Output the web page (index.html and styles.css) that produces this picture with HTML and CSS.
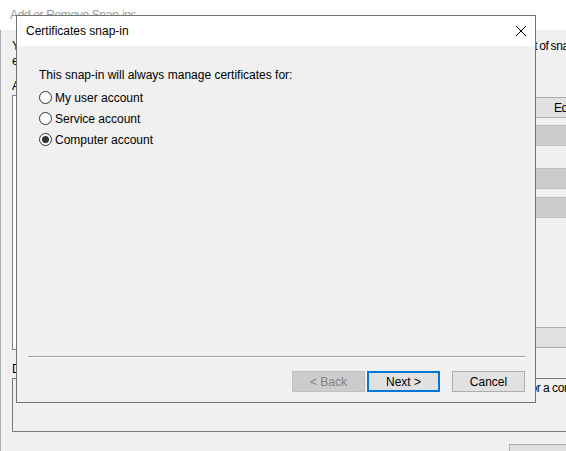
FILE: index.html
```html
<!DOCTYPE html>
<html lang="en">
<head>
<meta charset="utf-8">
<title>Certificates snap-in</title>
<link rel="stylesheet" href="styles.css">
</head>
<body>
<div class="bg-window">
  <div class="bg-title">Add or Remove Snap-ins</div>
  <div class="bg-body">
    <p class="bg-intro">You can select snap-ins for this console from those available on your computer and configure the selected set of snap-ins. For<br>extensible snap-ins, you can configure which extensions are enabled.</p>
    <div class="bg-label">Available snap-ins:</div>
    <div class="bg-main">
      <div class="bg-list"></div>
      <div class="bg-mid"><div class="bg-btn">Add &gt;</div></div>
      <div class="bg-list"></div>
      <div class="bg-side">
        <div class="bg-btn b-edit">Edit Extensions...</div>
        <div class="bg-btn is-disabled b-remove">Remove</div>
        <div class="bg-btn is-disabled b-up">Move Up</div>
        <div class="bg-btn is-disabled b-down">Move Down</div>
        <div class="bg-btn b-adv">Advanced...</div>
      </div>
    </div>
    <div class="bg-desc-label">Description:</div>
    <div class="bg-desc">The Certificates snap-in allows you to browse the contents of the certificate stores for yourself, a service, or a computer.</div>
    <div class="bg-footer">
      <div class="bg-btn b-ok">OK</div>
      <div class="bg-btn b-ok">Cancel</div>
    </div>
  </div>
</div>

<div class="dialog" role="dialog" aria-label="Certificates snap-in">
  <div class="dlg-title">
    <span>Certificates snap-in</span>
    <svg class="dlg-close" width="10" height="10" viewBox="0 0 10 10" aria-hidden="true">
      <path d="M0 0 L10 10 M10 0 L0 10" stroke="#000" stroke-width="1" fill="none"/>
    </svg>
  </div>
  <div class="dlg-body">
    <p class="dlg-lead">This snap-in will always manage certificates for:</p>
    <label class="radio-row"><input type="radio" name="acct" class="radio"><span>My user account</span></label>
    <label class="radio-row"><input type="radio" name="acct" class="radio"><span>Service account</span></label>
    <label class="radio-row"><input type="radio" name="acct" class="radio" checked><span>Computer account</span></label>
    <div class="dlg-footer">
      <div class="dlg-sep"></div>
      <div class="dlg-buttons">
        <button class="btn btn-disabled" disabled>&lt; Back</button>
        <button class="btn btn-default">Next &gt;</button>
        <button class="btn btn-cancel">Cancel</button>
      </div>
    </div>
  </div>
</div>
</body>
</html>
```
FILE: styles.css
```css
html, body {
  margin: 0;
  padding: 0;
}
body {
  width: 566px;
  height: 451px;
  overflow: hidden;
  position: relative;
  background: #f0f0f0;
  font-family: "Liberation Sans", Arial, sans-serif;
  font-size: 12px;
  color: #000;
}

/* ---------- background window ---------- */
.bg-window {
  width: 680px;
  letter-spacing: -0.36px;
}
.bg-title {
  height: 30px;
  background: #fff;
  display: flex;
  align-items: center;
  padding-left: 10px;
  color: #999;
}
.bg-body {
  border-left: 1px solid #aaaaaa;
  padding: 9px 12px 0 11px;
  height: 421px;
  box-sizing: border-box;
}
.bg-intro {
  margin: 0;
  line-height: 15px;
  white-space: nowrap;
  letter-spacing: -0.365px;
  word-spacing: -0.95px;
}
.bg-label {
  margin-top: 10px;
  line-height: 15px;
}
.bg-main {
  margin-top: 1px;
  display: grid;
  grid-template-columns: 218px 80px 1fr 142px;
  column-gap: 8px;
  height: 255px;
}
.bg-list {
  border: 1px solid #828282;
  background: #fff;
}
.bg-mid {
  display: flex;
  align-items: center;
}
.bg-side {
  display: flex;
  flex-direction: column;
  padding-top: 2px;
}
.bg-btn {
  height: 21px;
  box-sizing: border-box;
  border: 1px solid #adadad;
  background: #e1e1e1;
  display: flex;
  align-items: center;
  justify-content: center;
  width: 100%;
}
.bg-btn.is-disabled {
  background: #cccccc;
  border-color: #bfbfbf;
  color: #838383;
}
.b-remove { margin-top: 7px; }
.b-up { margin-top: 22px; }
.b-down { margin-top: 8px; }
.b-adv { margin-top: auto; margin-bottom: 2px; }

.bg-desc-label {
  margin-top: 12px;
  line-height: 15px;
}
.bg-desc {
  margin-top: 1px;
  height: 54px;
  box-sizing: border-box;
  border: 1px solid #7a7a7a;
  padding: 2px 3px;
  line-height: 15px;
  white-space: nowrap;
  word-spacing: -0.25px;
}
.bg-footer {
  margin-top: 12px;
  display: flex;
  justify-content: flex-end;
  gap: 9px;
}
.bg-btn.b-ok {
  width: 75px;
  height: 25px;
}

/* ---------- dialog ---------- */
.dialog {
  position: absolute;
  left: 16px;
  top: 15px;
  width: 520px;
  height: 388px;
  box-sizing: border-box;
  border: 1px solid #737373;
  background: #f0f0f0;
  display: flex;
  flex-direction: column;
}
.dlg-title {
  height: 30px;
  flex: none;
  background: #fff;
  display: flex;
  align-items: center;
  justify-content: space-between;
  padding: 0 9px 0 9px;
}
.dlg-close {
  display: block;
}
.dlg-body {
  flex: 1;
  display: flex;
  flex-direction: column;
  padding: 22px 0 10px 0;
}
.dlg-lead {
  margin: 0 0 4px 22px;
  line-height: 15px;
}
.radio-row {
  height: 21px;
  display: flex;
  align-items: center;
  gap: 3px;
  padding-left: 22px;
}
.radio {
  appearance: none;
  -webkit-appearance: none;
  margin: 0;
  width: 13px;
  height: 13px;
  box-sizing: border-box;
  border: 1px solid #333;
  border-radius: 50%;
  background: #fff;
  position: relative;
  flex: none;
}
.radio:checked::after {
  content: "";
  position: absolute;
  left: 2px;
  top: 2px;
  width: 7px;
  height: 7px;
  border-radius: 50%;
  background: #333;
}
.dlg-footer {
  margin-top: auto;
}
.dlg-sep {
  margin: 0 10px 0 11px;
  border-top: 1px solid #a0a0a0;
  border-bottom: 1px solid #fff;
}
.dlg-buttons {
  margin-top: 13px;
  display: flex;
  justify-content: flex-end;
  padding-right: 10px;
}
.btn {
  width: 73px;
  height: 21px;
  box-sizing: border-box;
  margin: 0;
  padding: 0;
  font-family: inherit;
  font-size: 12px;
  border: 1px solid #adadad;
  background: #e1e1e1;
  color: #000;
}
.btn-disabled {
  background: #cccccc;
  border-color: #bfbfbf;
  color: #838383;
}
.btn-default {
  margin-left: 2px;
  border: 2px solid #0078d7;
}
.btn-cancel {
  margin-left: 12px;
}
```
